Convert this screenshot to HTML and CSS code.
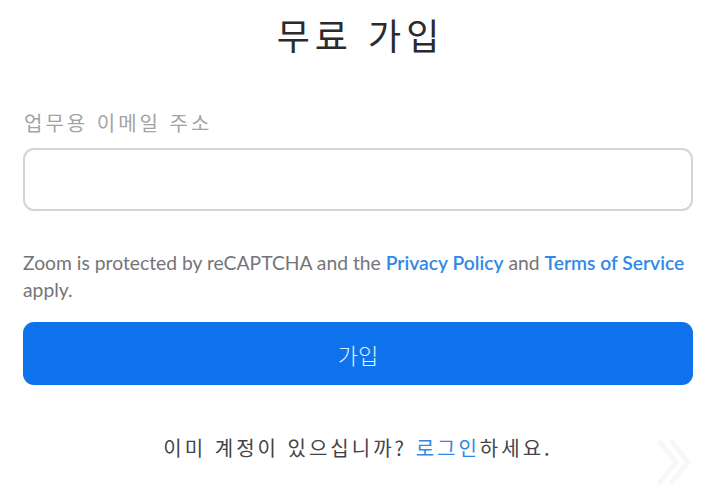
FILE: index.html
```html
<!DOCTYPE html>
<html lang="ko">
<head>
<meta charset="utf-8">
<link rel="stylesheet" href="styles.css">
</head>
<body>
<main class="page">
  <h1 class="title">무료 가입</h1>
  <label class="label" for="email">업무용 이메일 주소</label>
  <input class="input" id="email" type="email">
  <p class="captcha">Zoom is protected by reCAPTCHA and the <a href="#">Privacy Policy</a> and <a href="#">Terms of Service</a> apply.</p>
  <button class="btn" type="button">가입</button>
  <p class="login">이미 계정이 있으십니까? <a href="#">로그인</a>하세요.</p>
</main>
<svg class="chev" width="40" height="60" viewBox="0 0 40 60" aria-hidden="true">
  <path d="M8 10 L24 30 L8 50 M20 10 L36 30 L20 50" fill="none" stroke="#f7f7f7" stroke-width="5" stroke-linecap="round" stroke-linejoin="round"/>
</svg>
</body>
</html>
```
FILE: styles.css
```css
html, body {
  margin: 0;
  padding: 0;
  background: #ffffff;
}
body {
  width: 707px;
  height: 498px;
  overflow: hidden;
  position: relative;
  font-family: "Noto Sans CJK KR", "Noto Sans", sans-serif;
}
.page {
  padding: 0 14px 0 23px;
  display: flex;
  flex-direction: column;
}
.title {
  margin: 8px 0 0;
  text-align: center;
  font-size: 36px;
  font-weight: 400;
  letter-spacing: 5px;
  padding-left: 5px;
  color: #2b2b2e;
  line-height: 52px;
}
.label {
  margin-top: 50px;
  font-size: 20px;
  letter-spacing: 3px;
  color: #a3a3a6;
  line-height: 26px;
  padding-left: 1px;
}
.input {
  margin-top: 12px;
  height: 63px;
  box-sizing: border-box;
  border: 2px solid #d4d4d8;
  border-radius: 11px;
  background: #fff;
  outline: none;
}
.captcha {
  margin: 38px 0 0;
  font-family: Lato, "Liberation Sans", sans-serif;
  font-size: 19.3px;
  line-height: 27px;
  color: #747478;
}
.captcha a {
  color: #3288e6;
  text-decoration: none;
  font-weight: 600;
}
.btn {
  margin-top: 19px;
  height: 63px;
  border: none;
  border-radius: 11px;
  background: #0e72ed;
  color: #e6efff;
  font-family: "Noto Sans CJK KR", sans-serif;
  font-size: 22px;
  font-weight: 300;
  padding: 0;
}
.login {
  margin: 49px 0 0;
  text-align: center;
  font-size: 20px;
  letter-spacing: 3px;
  color: #434347;
  line-height: 28px;
}
.login a {
  color: #3288e6;
  text-decoration: none;
}
.chev {
  position: absolute;
  left: 652px;
  top: 432px;
}
```
